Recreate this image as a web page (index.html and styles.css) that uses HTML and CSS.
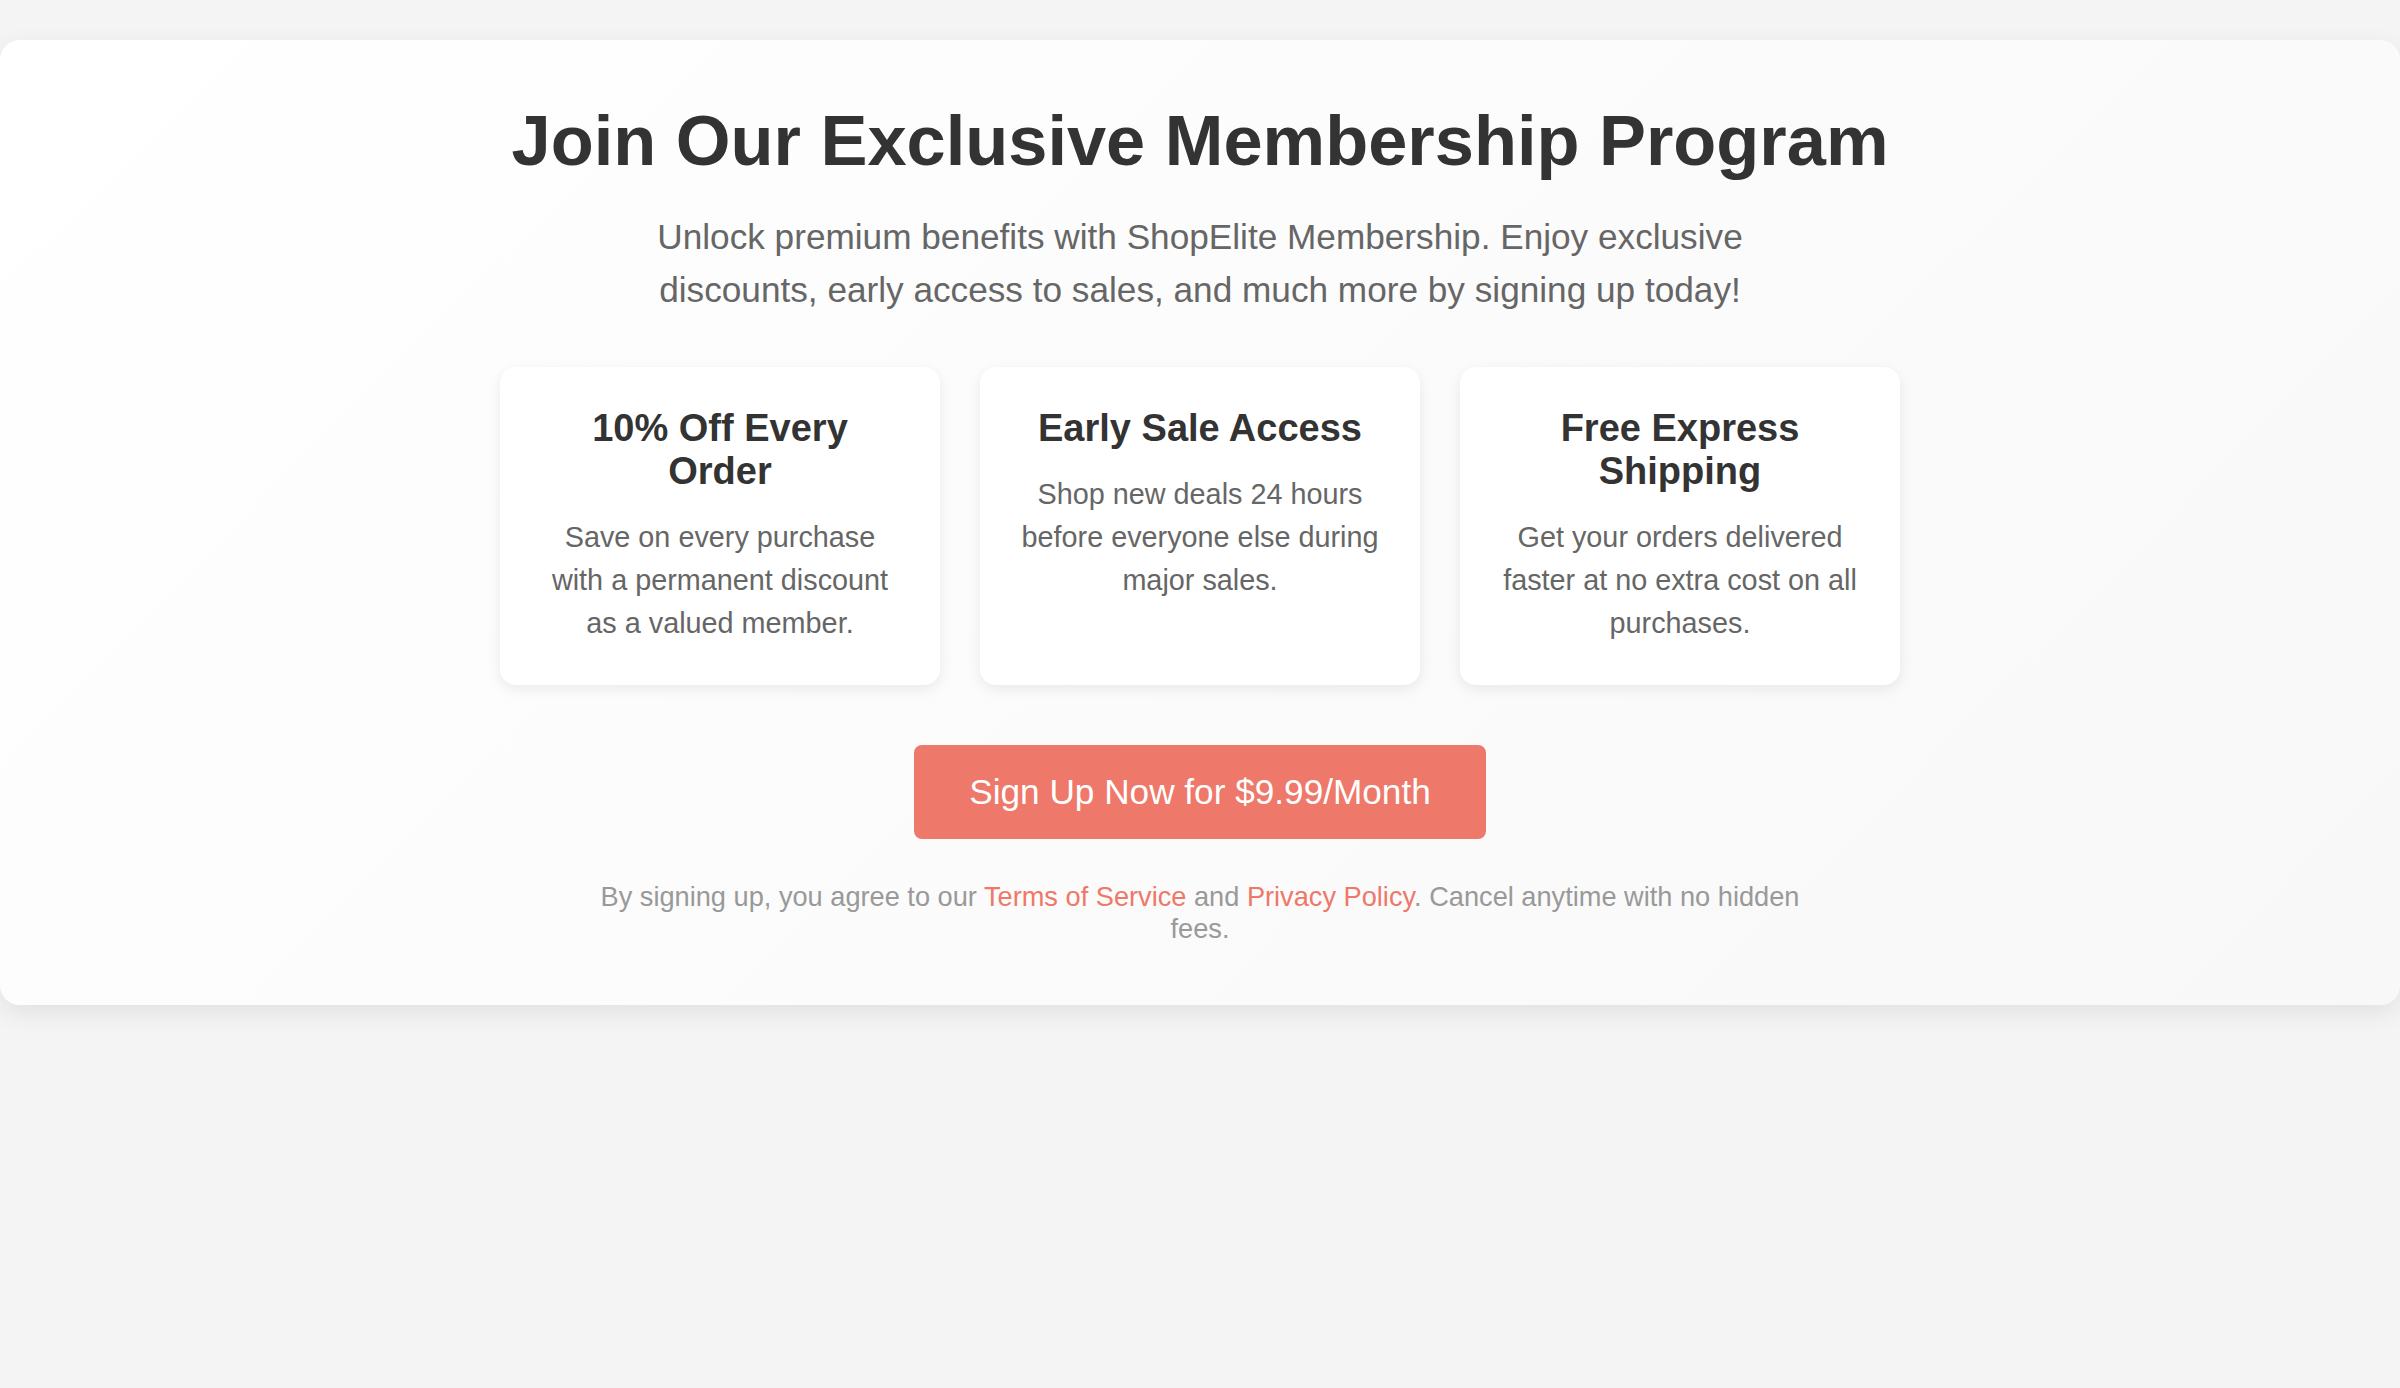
FILE: index.html
```html
<!DOCTYPE html>
<html lang="en">
<head>
<meta charset="utf-8">
<title>ShopElite Membership</title>
<link rel="stylesheet" href="styles.css">
</head>
<body>
<section class="membership">
  <h1 class="title">Join Our Exclusive Membership Program</h1>
  <p class="intro">Unlock premium benefits with ShopElite Membership. Enjoy exclusive discounts, early access to sales, and much more by signing up today!</p>
  <div class="benefits">
    <div class="benefit">
      <h3 class="benefit-title">10% Off Every Order</h3>
      <p class="benefit-text">Save on every purchase with a permanent discount as a valued member.</p>
    </div>
    <div class="benefit">
      <h3 class="benefit-title">Early Sale Access</h3>
      <p class="benefit-text">Shop new deals 24 hours before everyone else during major sales.</p>
    </div>
    <div class="benefit">
      <h3 class="benefit-title">Free Express Shipping</h3>
      <p class="benefit-text">Get your orders delivered faster at no extra cost on all purchases.</p>
    </div>
  </div>
  <a class="cta" href="#">Sign Up Now for $9.99/Month</a>
  <p class="terms">By signing up, you agree to our <a href="#">Terms of Service</a> and <a href="#">Privacy Policy</a>. Cancel anytime with no hidden fees.</p>
</section>
</body>
</html>
```

FILE: styles.css
```css
* { box-sizing: border-box; }

html, body {
  margin: 0;
  padding: 0;
}

body {
  background: #f4f4f4;
  font-family: "Liberation Sans", Arial, Helvetica, sans-serif;
  color: #333;
  min-height: 1388px;
}

.membership {
  margin-top: 40px;
  background: linear-gradient(135deg, #ffffff 0%, #f8f8f8 100%);
  border-radius: 20px;
  box-shadow: 0 8px 24px rgba(0, 0, 0, 0.08);
  padding: 60px 40px 60px;
  display: flex;
  flex-direction: column;
  align-items: center;
  text-align: center;
}

.title {
  margin: 0;
  font-size: 70.4px;
  font-weight: 700;
  line-height: normal;
  color: #333;
}

.intro {
  margin: 30px 0 0;
  max-width: 1120px;
  font-size: 35.2px;
  line-height: 1.5;
  color: #666;
}

.benefits {
  margin-top: 50px;
  display: grid;
  grid-template-columns: repeat(3, 440px);
  gap: 40px;
}

.benefit {
  background: #fff;
  border-radius: 16px;
  box-shadow: 0 4px 14px rgba(0, 0, 0, 0.08);
  padding: 40px 38px;
}

.benefit-title {
  margin: 0 0 23px;
  font-size: 38px;
  font-weight: 700;
  line-height: normal;
  color: #333;
}

.benefit-text {
  margin: 0;
  font-size: 28.8px;
  line-height: 1.5;
  color: #666;
}

.cta {
  margin-top: 60px;
  display: inline-block;
  background: #ee7869;
  color: #fff;
  text-decoration: none;
  font-size: 35.2px;
  line-height: 40px;
  padding: 27px 55px;
  border-radius: 8px;
}

.terms {
  margin: 42px 0 0;
  max-width: 1230px;
  font-size: 27.2px;
  line-height: 1.18;
  color: #999;
}

.terms a {
  color: #ee7869;
  text-decoration: none;
}
```
